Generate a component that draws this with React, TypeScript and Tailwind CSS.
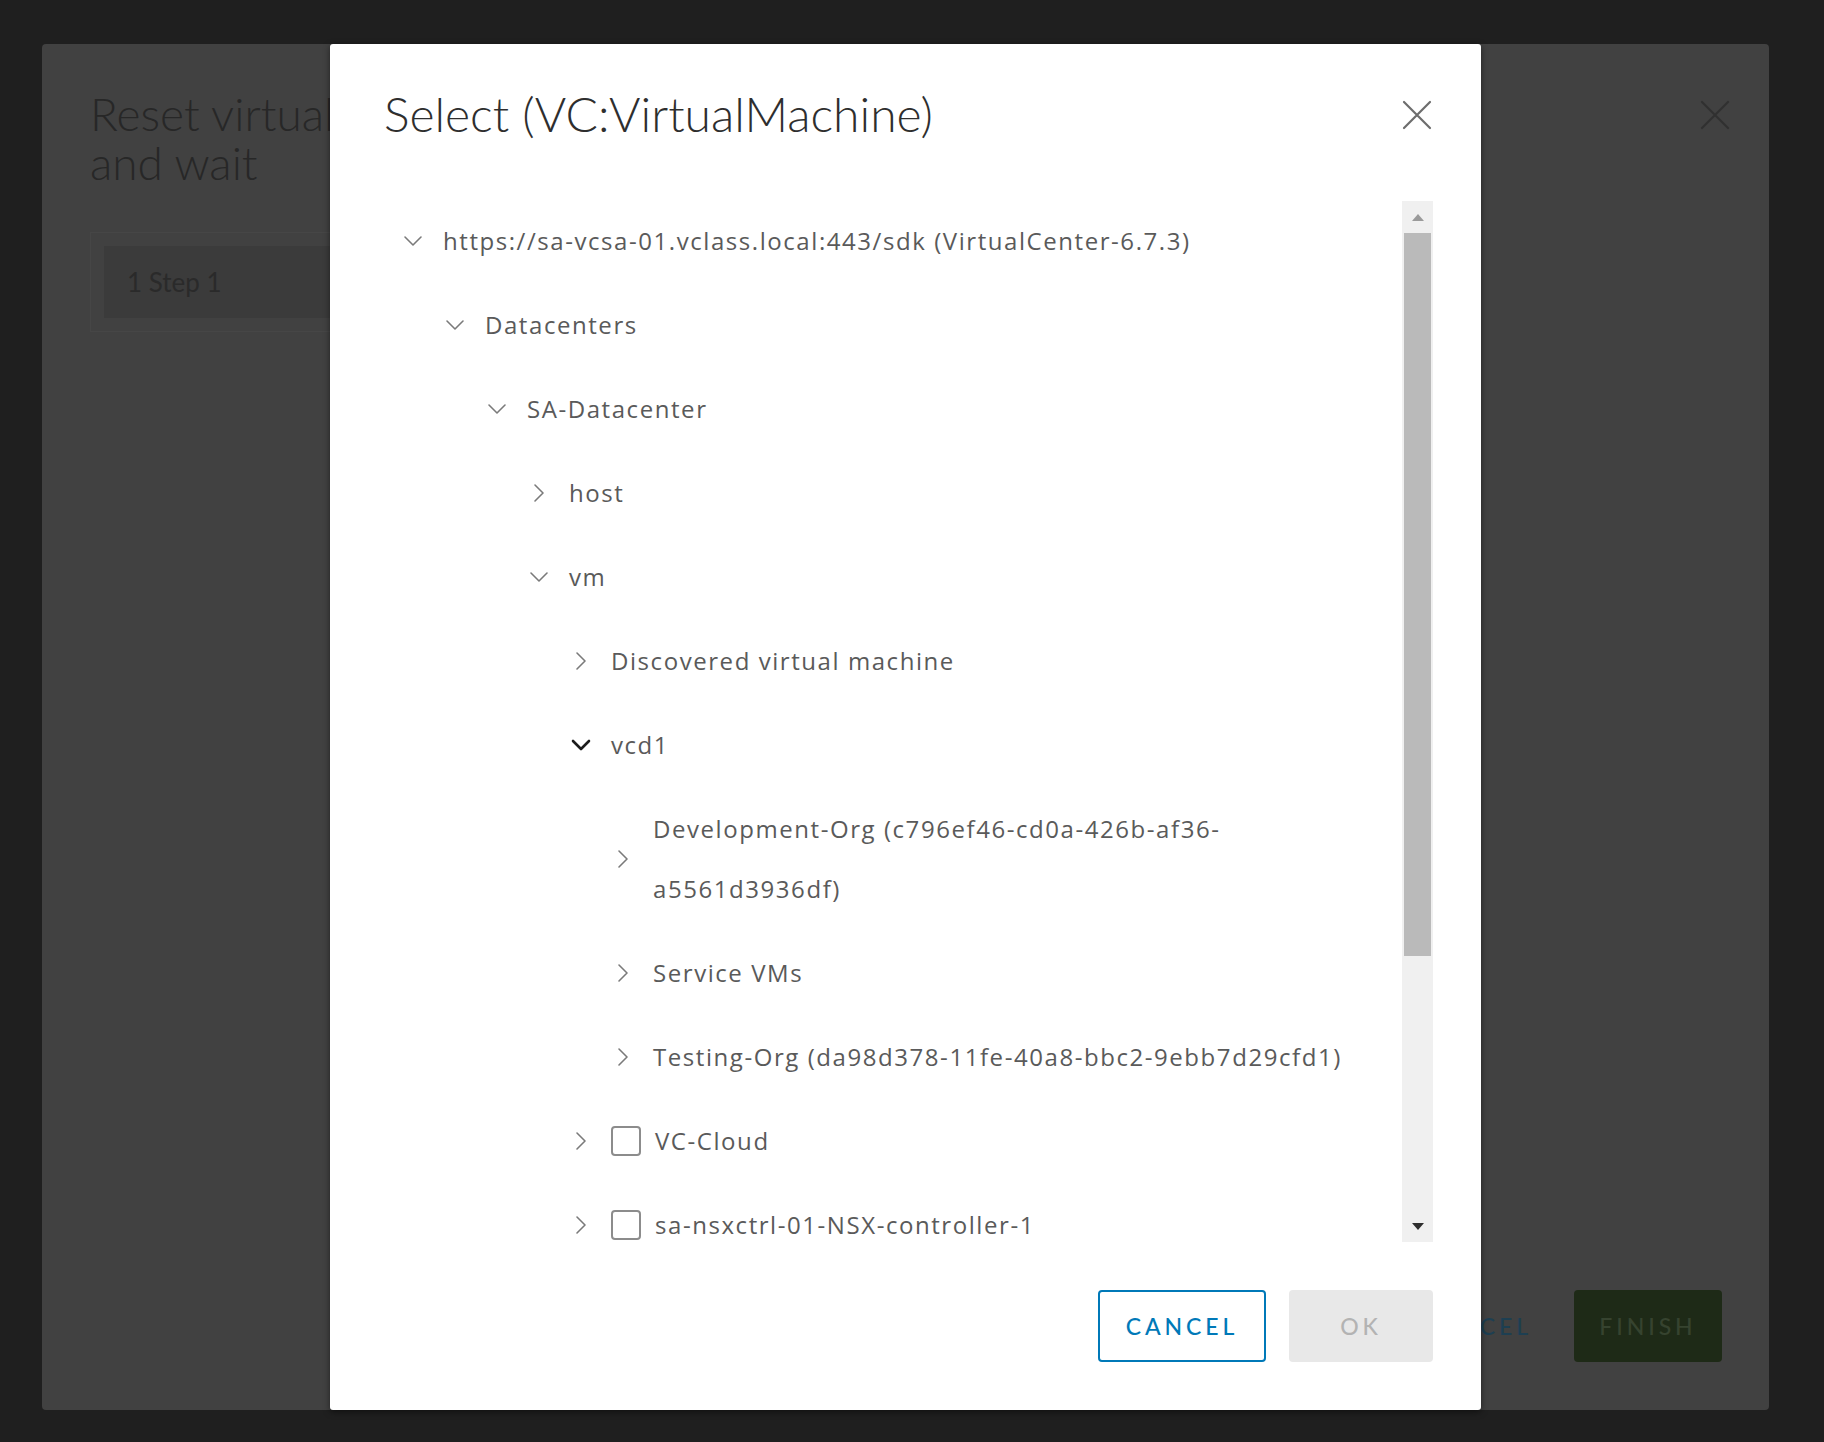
import React from 'react';

type Node = {
  label: string[];
  level: number;
  open?: boolean;
  dark?: boolean;
  check?: boolean;
};

const nodes: Node[] = [
  { label: ['https://sa-vcsa-01.vclass.local:443/sdk (VirtualCenter-6.7.3)'], level: 0, open: true },
  { label: ['Datacenters'], level: 1, open: true },
  { label: ['SA-Datacenter'], level: 2, open: true },
  { label: ['host'], level: 3 },
  { label: ['vm'], level: 3, open: true },
  { label: ['Discovered virtual machine'], level: 4 },
  { label: ['vcd1'], level: 4, open: true, dark: true },
  { label: ['Development-Org (c796ef46-cd0a-426b-af36-', 'a5561d3936df)'], level: 5 },
  { label: ['Service VMs'], level: 5 },
  { label: ['Testing-Org (da98d378-11fe-40a8-bbc2-9ebb7d29cfd1)'], level: 5 },
  { label: ['VC-Cloud'], level: 4, check: true },
  { label: ['sa-nsxctrl-01-NSX-controller-1'], level: 4, check: true },
];

const indent = ['pl-[68px]', 'pl-[110px]', 'pl-[152px]', 'pl-[194px]', 'pl-[236px]', 'pl-[278px]'];

const Caret = ({ open, dark }: { open?: boolean; dark?: boolean }) => {
  const color = dark ? '#1c1c1c' : '#7a7a7a';
  const width = dark ? 2.6 : 1.6;
  return (
    <span className="flex w-[30px] shrink-0 items-center justify-center">
      {open ? (
        <svg width="20" height="12" viewBox="0 0 20 12" fill="none">
          <path d="M2 2 L10 10 L18 2" stroke={color} strokeWidth={width} strokeLinecap="round" strokeLinejoin="round" />
        </svg>
      ) : (
        <svg width="12" height="20" viewBox="0 0 12 20" fill="none">
          <path d="M2 2 L10 10 L2 18" stroke={color} strokeWidth={width} strokeLinecap="round" strokeLinejoin="round" />
        </svg>
      )}
    </span>
  );
};

const Cross = ({ color }: { color: string }) => (
  <svg width="30" height="30" viewBox="0 0 30 30" fill="none">
    <path d="M2 2 L28 28 M28 2 L2 28" stroke={color} strokeWidth="2.2" strokeLinecap="round" />
  </svg>
);

const TreeRow = ({ node }: { node: Node }) => (
  <div className={`flex items-center py-[12px] ${indent[node.level]}`}>
    <Caret open={node.open} dark={node.dark} />
    {node.check && (
      <span className="ml-[15px] h-[30px] w-[30px] shrink-0 rounded-[4px] border-2 border-[#8c8c8c] bg-white" />
    )}
    <div className={`leading-[60px] text-[#5a5a5a] ${node.check ? 'ml-[14px]' : 'ml-[15px]'}`}>
      {node.label.map((line) => (
        <div key={line} className="whitespace-nowrap">
          {line}
        </div>
      ))}
    </div>
  </div>
);

export default function App() {
  return (
    <div className="h-[1442px] w-[1824px] overflow-hidden bg-[#1f1f1f] pl-[42px] pt-[44px] font-['Lato','Open_Sans',sans-serif]">
      <div className="relative flex h-[1366px] w-[1727px] flex-col rounded-[4px] bg-[#414141]">
        <div className="flex items-start justify-between pl-[48px] pr-[39px] pt-[45px]">
          <div className="w-[240px] overflow-hidden whitespace-nowrap text-[46px] font-light leading-[49px] text-[#272727]">
            <div>Reset virtual machine</div>
            <div>and wait</div>
          </div>
          <div className="pt-[11px] opacity-70">
            <Cross color="#2a2a2a" />
          </div>
        </div>
        <div className="ml-[48px] mt-[45px] w-[400px] border border-[#464646] p-[13px]">
          <div className="flex h-[72px] items-center bg-[#3b3b3b] pl-[23px] text-[26px] text-[#2a2a2a]">
            1 Step 1
          </div>
        </div>
        <div className="mt-auto mb-[48px] flex justify-end gap-[14px] pr-[47px]">
          <button className="h-[72px] px-[28px] text-[23px] font-medium tracking-[0.17em] text-[#1d3f52]">
            CANCEL
          </button>
          <button className="h-[72px] w-[148px] rounded-[4px] bg-[#1e2a17] text-[23px] font-medium tracking-[0.17em] text-[#36432f]">
            FINISH
          </button>
        </div>

        <div className="absolute left-[288px] top-0 flex h-[1366px] w-[1151px] flex-col rounded-[3px] bg-white shadow-[0_2px_6px_rgba(0,0,0,0.5)]">
          <div className="flex h-[157px] shrink-0 items-start justify-between pl-[54px] pr-[49px] pt-[40px]">
            <h3 className="text-[48px] font-light leading-[60px] text-[#2e2e2e]">Select (VC:VirtualMachine)</h3>
            <div className="pt-[16px]">
              <Cross color="#6d6d6d" />
            </div>
          </div>

          <div className="flex h-[1041px] shrink-0 pr-[48px]">
            <div className="flex-1 overflow-hidden font-['Open_Sans',sans-serif] text-[24px] tracking-[0.065em]">
              <div className="-mt-[2px]">
                {nodes.map((n) => (
                  <TreeRow key={n.label[0]} node={n} />
                ))}
              </div>
            </div>
            <div className="flex w-[31px] shrink-0 flex-col bg-[#f0f0f0]">
              <div className="flex h-[32px] items-center justify-center">
                <svg width="12" height="7" viewBox="0 0 12 7">
                  <path d="M6 0 L12 7 L0 7 Z" fill="#9a9a9a" />
                </svg>
              </div>
              <div className="mx-[2px] h-[723px] bg-[#bababa]" />
              <div className="flex-1" />
              <div className="flex h-[32px] items-center justify-center">
                <svg width="12" height="7" viewBox="0 0 12 7">
                  <path d="M0 0 L12 0 L6 7 Z" fill="#2e2e2e" />
                </svg>
              </div>
            </div>
          </div>

          <div className="flex justify-end gap-[23px] pr-[48px] pt-[48px]">
            <button className="h-[72px] w-[168px] rounded-[4px] border-2 border-[#0079b8] bg-white text-[23px] font-medium tracking-[0.17em] text-[#0079b8]">
              CANCEL
            </button>
            <button className="h-[72px] w-[144px] rounded-[4px] bg-[#e8e8e8] text-[23px] font-medium tracking-[0.17em] text-[#b3b3b3]">
              OK
            </button>
          </div>
        </div>
      </div>
    </div>
  );
}
